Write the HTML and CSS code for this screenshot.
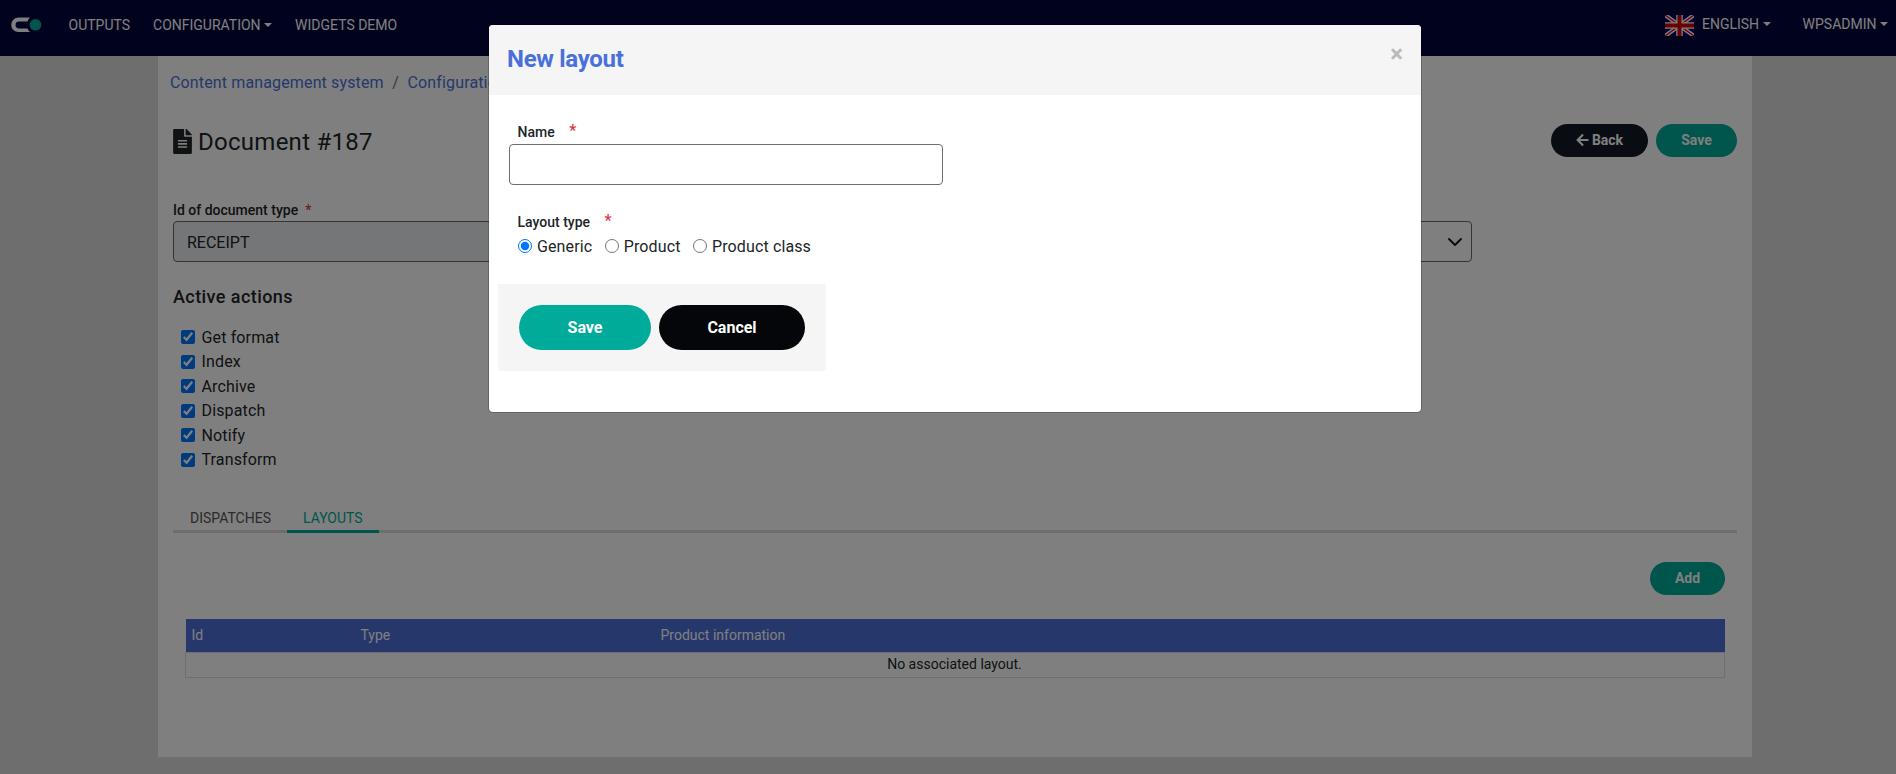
FILE: index.html
```html
<!DOCTYPE html>
<html lang="en">
<head>
<meta charset="utf-8">
<title>Document #187</title>
<link rel="stylesheet" href="styles.css">
</head>
<body>
<header class="navbar">
  <svg class="logo" viewBox="0 0 31 16" width="31" height="16">
    <path d="M19 .5H7.500a7.300 7.300 0 0 0 0 14.600H19c-1.200-1-2-2.200-2.500-3.600H8a3.300 3.300 0 0 1 0-6.900h8.500C17 3 17.800 1.600 19 .5z" fill="#fff"/>
    <circle cx="24.500" cy="7.800" r="5.800" fill="#00ab9a"/>
  </svg>
  <nav class="menu">
    <a>OUTPUTS</a>
    <a>CONFIGURATION<i class="caret"></i></a>
    <a>WIDGETS DEMO</a>
  </nav>
  <div class="session">
    <svg class="flag" viewBox="0 0 29 21" width="29" height="21">
      <path d="M0 0h29v21H0z" fill="#00006b"/>
      <path d="M0 0l29 21M29 0L0 21" stroke="#fff" stroke-width="4.200"/>
      <path d="M0 0l29 21M29 0L0 21" stroke="#d0001c" stroke-width="1.400"/>
      <path d="M14.500 0v21M0 10.500h29" stroke="#fff" stroke-width="6.500"/>
      <path d="M14.500 0v21M0 10.500h29" stroke="#d00000" stroke-width="4"/>
    </svg>
    <a class="lang">ENGLISH<i class="caret"></i></a>
    <a>WPSADMIN<i class="caret"></i></a>
  </div>
</header>

<main class="page">
  <div class="crumbs"><a>Content management system</a><span>/</span><a>Configuration</a></div>
  <div class="title-row">
    <h1><svg viewBox="0 0 384 512" width="19" height="25"><path fill="#212529" d="M224 136V0H24C10.700 0 0 10.700 0 24v464c0 13.300 10.700 24 24 24h336c13.300 0 24-10.700 24-24V160H248c-13.200 0-24-10.800-24-24zm64 236c0 6.600-5.400 12-12 12H108c-6.600 0-12-5.400-12-12v-8c0-6.600 5.400-12 12-12h168c6.600 0 12 5.400 12 12v8zm0-64c0 6.600-5.400 12-12 12H108c-6.600 0-12-5.400-12-12v-8c0-6.600 5.400-12 12-12h168c6.600 0 12 5.400 12 12v8zm0-72v8c0 6.600-5.400 12-12 12H108c-6.600 0-12-5.400-12-12v-8c0-6.600 5.400-12 12-12h168c6.600 0 12 5.400 12 12zm96-114.100v6.100H256V0h6.100c6.400 0 12.500 2.500 17 7l97.900 98c4.500 4.500 7 10.600 7 16.900z"/></svg><span>Document #187</span></h1>
    <div class="tools">
      <button class="btn dark"><svg viewBox="0 0 448 512" width="13" height="14"><path fill="#fff" d="M257.500 445.100l-22.200 22.200c-9.400 9.400-24.600 9.400-33.900 0L7 273c-9.400-9.400-9.400-24.600 0-33.900L201.400 44.700c9.400-9.400 24.600-9.400 33.900 0l22.200 22.200c9.500 9.500 9.300 25-.4 34.300L136.600 216H424c13.300 0 24 10.700 24 24v32c0 13.300-10.700 24-24 24H136.600l120.500 114.800c9.800 9.300 10 24.800.4 34.300z"/></svg>Back</button>
      <button class="btn">Save</button>
    </div>
  </div>
  <label class="field-label">Id of document type<em>*</em></label>
  <div class="selects">
    <div class="select readonly">RECEIPT</div>
    <div class="select"><svg viewBox="0 0 16 16" width="16" height="16"><path d="M2 5l6 6 6-6" fill="none" stroke="#14182b" stroke-width="2" stroke-linecap="round" stroke-linejoin="round"/></svg></div>
  </div>
  <h2>Active actions</h2>
  <div class="checks">
    <label><input type="checkbox" checked><span>Get format</span></label>
    <label><input type="checkbox" checked><span>Index</span></label>
    <label><input type="checkbox" checked><span>Archive</span></label>
    <label><input type="checkbox" checked><span>Dispatch</span></label>
    <label><input type="checkbox" checked><span>Notify</span></label>
    <label><input type="checkbox" checked><span>Transform</span></label>
  </div>
  <div class="tabs"><a>DISPATCHES</a><a class="active">LAYOUTS</a></div>
  <div class="panel">
    <button class="btn add">Add</button>
    <table>
      <thead><tr><th class="c-id">Id</th><th class="c-type">Type</th><th>Product information</th></tr></thead>
      <tbody><tr><td colspan="3">No associated layout.</td></tr></tbody>
    </table>
  </div>
</main>

<div class="backdrop">
  <section class="modal">
    <div class="modal-head"><h3>New layout</h3><span class="close">×</span></div>
    <div class="modal-body">
      <label class="form-label">Name<em>*</em></label>
      <input class="text" type="text">
      <label class="form-label second">Layout type<em>*</em></label>
      <div class="radios">
        <label><input type="radio" name="t" checked><span>Generic</span></label>
        <label><input type="radio" name="t"><span>Product</span></label>
        <label><input type="radio" name="t"><span>Product class</span></label>
      </div>
      <div class="actions">
        <button class="big save">Save</button>
        <button class="big cancel">Cancel</button>
      </div>
    </div>
  </section>
</div>
</body>
</html>
```
FILE: styles.css
```css
* { box-sizing: border-box; }
body { margin: 0; height: 774px; overflow: hidden; background: #dcdcdc; color: #212529; font: 16px/24px Roboto, "Liberation Sans", sans-serif; }
h1, h2, h3 { margin: 0; }
em { font-style: normal; color: #dc3545; }
button { font-family: inherit; border: 0; color: #fff; }

.navbar { height: 56px; background: #03053a; display: flex; align-items: flex-start; padding: 0 8px 0 11px; color: #fff; font-size: 14px; line-height: 20px; }
.logo { margin-top: 17px; }
.menu { display: flex; gap: 23px; margin: 15px 0 0 26.500px; }
.caret { display: inline-block; margin-left: 4px; vertical-align: 3px; border: 4px solid transparent; border-top-color: #fff; border-bottom: 0; }
.session { display: flex; margin: 14px 0 0 auto; }
.flag { margin-top: 1px; margin-right: 8px; }
.lang { margin-right: 32px; }
.menu .caret, .session .caret { margin-left: 3.500px; }

.page { width: 1594px; height: 701px; margin-left: 158px; background: #fff; padding: 15px 15px 0; }
.crumbs { display: flex; gap: 8.500px; margin-left: -3px; color: #4a71da; letter-spacing: .14px; }
.crumbs span { color: #6c757d; }
.title-row { display: flex; justify-content: space-between; margin-top: 29px; height: 34px; }
h1 { display: flex; align-items: center; gap: 6px; font-size: 24px; font-weight: 400; letter-spacing: .27px; }
h1 span { padding-top: 1px; }
.tools { display: flex; gap: 8px; }
.btn { height: 33px; border-radius: 17px; background: #00ab9a; font-size: 14px; font-weight: 700; width: 81px; padding: 0 0 1px; display: flex; align-items: center; justify-content: center; gap: 3px; }
.btn.dark { width: 97px; background: #121826; }
.field-label { display: block; margin-top: 42px; font-size: 14px; line-height: 20px; font-weight: 500; }
.field-label em { margin-left: 7px; }
.selects { display: grid; grid-template-columns: 640px 640px; gap: 19px; margin-top: 1px; }
.select { height: 41px; border: 1px solid #6b6b6b; border-radius: 4px; padding: 2px 13px 0; display: flex; align-items: center; }
.readonly { background: #e9ecef; }
.select svg { margin-left: auto; }
.selects .select:last-child { padding: 0 8px 0 0; }
h2 { font-size: 18px; line-height: 24px; font-weight: 500; letter-spacing: .42px; margin-top: 23px; }
.checks { margin: 16px 0 0 8px; letter-spacing: .14px; }
.checks label { display: flex; align-items: center; height: 24.500px; }
.checks span { padding-top: 1px; }
input[type=checkbox] { width: 14px; height: 14px; margin: 0 6.500px 0 0; accent-color: #0075ff; }
.tabs { display: flex; margin-top: 31px; height: 30px; border-bottom: 3px solid #dcdcdc; font-size: 14px; line-height: 30px; color: #555; }
.tabs a { padding: 0 16px 0 17px; height: 30px; }
.tabs .active { padding: 0 16px; color: #00ab9a; border-bottom: 3px solid #00ab9a; }
.panel { padding: 29px 12px 0; }
.add { width: 75px; margin-left: auto; }
table { width: 1540px; margin-top: 24px; border-collapse: collapse; table-layout: fixed; font-size: 14px; line-height: 20px; }
th { height: 33px; padding: 0 6px; text-align: left; font-weight: 400; color: #fff; background: #4c6fd8; }
.c-id { width: 169px; }
.c-type { width: 300px; }
td { height: 25px; padding: 0 1px 2px 0; text-align: center; border: 1px solid #dcdcf5; }

.backdrop { position: absolute; inset: 0; background: rgba(0, 0, 0, .5); display: flex; align-items: flex-start; justify-content: center; padding-top: 24px; }
.modal { width: 934px; height: 389px; margin-left: 14px; background: #fff; background-clip: padding-box; border: 1px solid rgba(0, 0, 0, .2); border-radius: 5px; overflow: hidden; }
.modal-head { height: 70px; background: #f5f5f5; display: flex; justify-content: space-between; padding: 18px 18px 0; }
h3 { font-size: 24px; line-height: 32px; font-weight: 700; letter-spacing: -.3px; color: #4a71da; }
.close { font-size: 24px; line-height: 22px; font-weight: 700; color: #bababa; }
.modal-body { padding: 27px 9px 0; }
.form-label { display: flex; gap: 14.500px; font-size: 14px; line-height: 20px; font-weight: 500; margin-left: 19.500px; }
.form-label em { line-height: 18px; font-size: 16px; }
.text { display: block; width: 434px; height: 41px; margin: 2px 0 0 11px; border: 1px solid #6f6f6f; border-radius: 4px; }
.second { margin-top: 27px; }
.radios { display: flex; gap: 12.500px; margin: 2px 0 0 20px; letter-spacing: .12px; }
.radios label { display: flex; align-items: center; }
.radios span { padding-top: 1px; }
input[type=radio] { width: 14px; height: 14px; margin: -2px 5px 0 0; accent-color: #0075ff; }
.actions { width: 328px; height: 87px; margin-top: 25px; padding: 21px; display: flex; gap: 8px; background: #f5f5f5; border-radius: 0 0 4px 4px; }
.big { height: 45px; border-radius: 23px; padding: 0; font-size: 16px; font-weight: 700; }
.save { width: 132px; background: #00ab9a; }
.cancel { width: 146px; background: #04060a; }
```
